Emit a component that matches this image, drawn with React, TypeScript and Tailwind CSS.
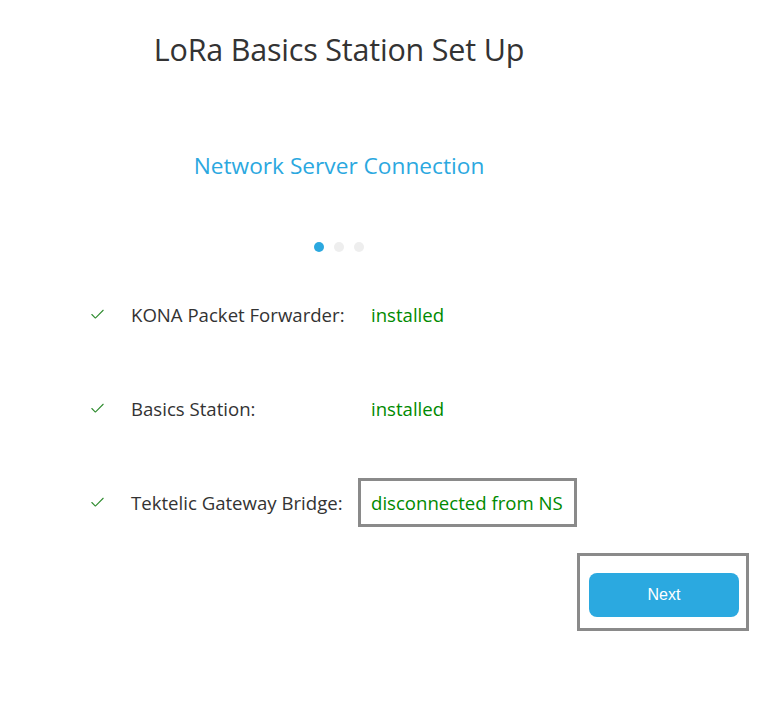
import { Check } from 'lucide-react'

const rows = [
  { label: 'KONA Packet Forwarder:', value: 'installed', boxed: false },
  { label: 'Basics Station:', value: 'installed', boxed: false },
  { label: 'Tektelic Gateway Bridge:', value: 'disconnected from NS', boxed: true },
]

export default function App() {
  return (
    <div
      className="w-[762px] h-[721px] bg-white text-[#333333]"
      style={{ fontFamily: '"Open Sans", "Noto Sans", sans-serif' }}
    >
      <div className="w-[678px] pt-[28px]">
        <h1 className="text-center text-[30.5px] leading-[42px] font-normal tracking-[-0.2px]">
          LoRa Basics Station Set Up
        </h1>
        <h2 className="mt-[81px] text-center text-[22.7px] leading-[30px] text-[#2ba8df]">
          Network Server Connection
        </h2>
        {/* step dots */}
        <div className="mt-[61px] flex justify-center gap-[10px]">
          <span className="w-[10px] h-[10px] rounded-full bg-[#2ba8df]" />
          <span className="w-[10px] h-[10px] rounded-full bg-[#eeeeee]" />
          <span className="w-[10px] h-[10px] rounded-full bg-[#eeeeee]" />
        </div>
      </div>

      <div className="mt-[38px] flex flex-col gap-[45px] pl-[89px]">
        {rows.map((row) => (
          <div className="flex items-center h-[49px]" key={row.label}>
            <Check className="w-[17px] h-[17px] text-[#2e8b2e]" strokeWidth={1.5} />
            <span className="ml-[25px] w-[227px] text-[18.6px] whitespace-nowrap">{row.label}</span>
            {row.boxed ? (
              <span className="h-[49px] flex items-center border-[3px] border-[#8a8a8a] pl-[10px] pr-[11px] text-[18.6px] text-[#008a00] whitespace-nowrap">
                {row.value}
              </span>
            ) : (
              <span className="ml-[13px] text-[18.6px] text-[#008a00]">{row.value}</span>
            )}
          </div>
        ))}
      </div>

      <div className="mt-[26px] flex pl-[577px]">
        <div className="w-[172px] h-[78px] border-[3px] border-[#8a8a8a] pl-[9px] pt-[17px]">
          <button
            className="w-[150px] h-[44px] rounded-[8px] bg-[#2ba9e0] text-white text-[16px]"
            style={{ fontFamily: '"Liberation Sans", Arial, sans-serif' }}
          >
            Next
          </button>
        </div>
      </div>
    </div>
  )
}
